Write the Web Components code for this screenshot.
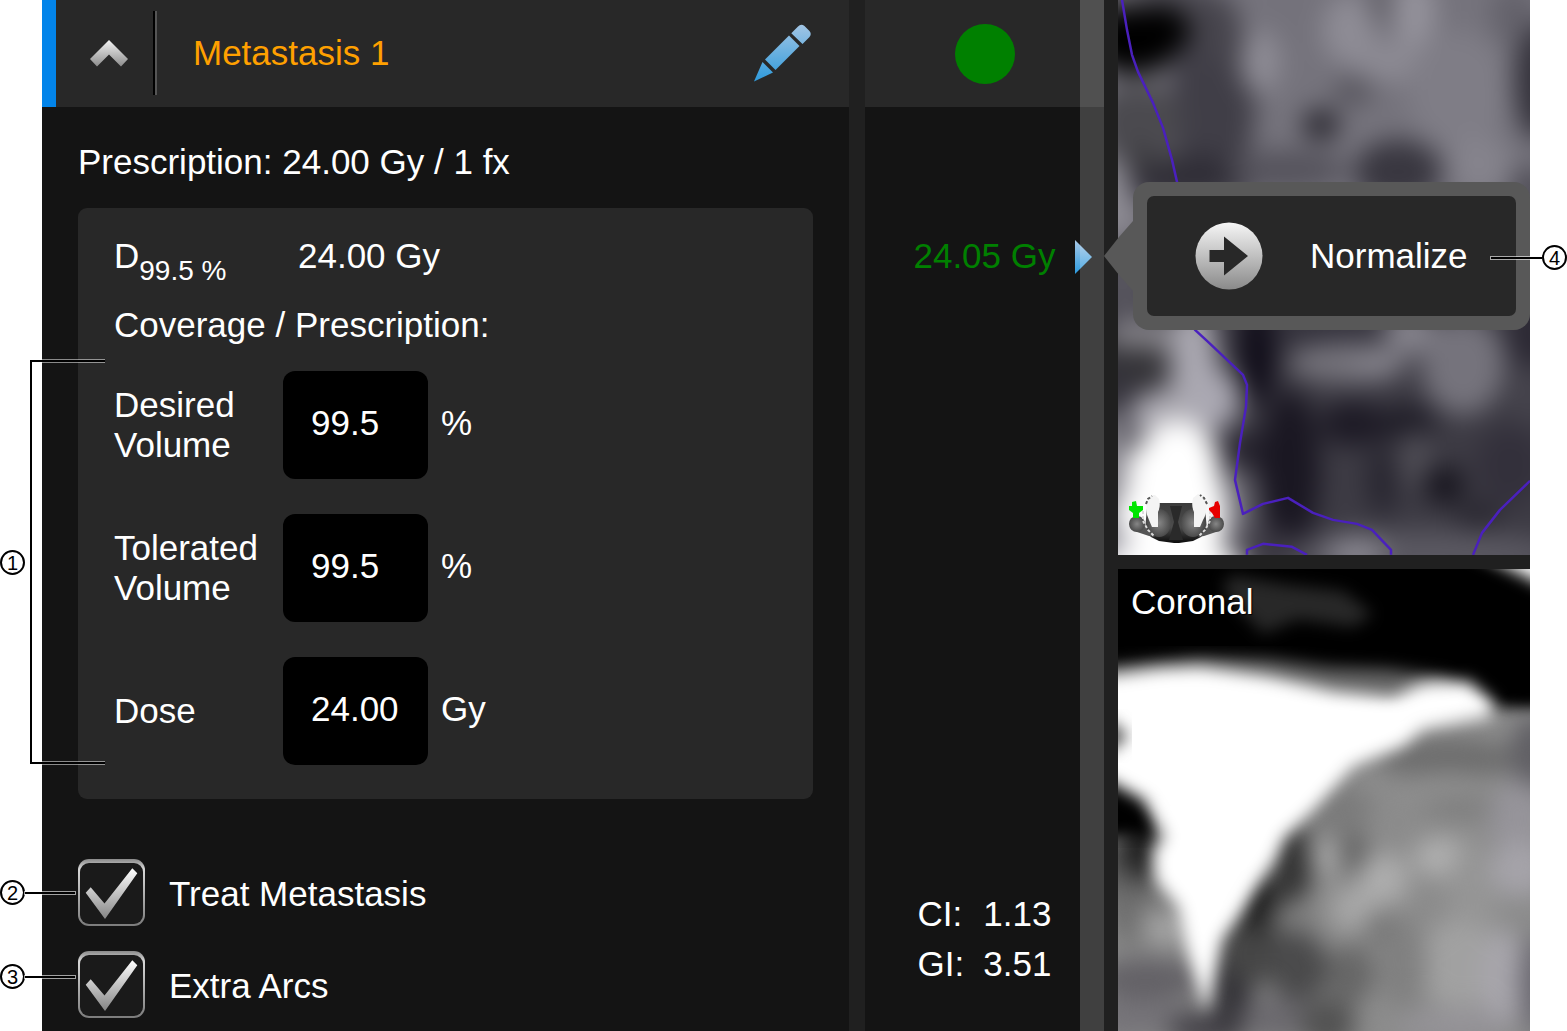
<!DOCTYPE html>
<html lang="en">
<head>
<meta charset="utf-8">
<meta name="viewport" content="width=device-width, initial-scale=1">
<title>Metastasis 1</title>
<style>
  body {
    margin: 0;
    background: #fff;
    color: #fff;
    font-family: "Liberation Sans", Arial, sans-serif;
    font-size: 35px;
    line-height: 40px;
  }
</style>
</head>
<body>
<plan-workspace>
  <plan-column slot="plan">
    <target-header slot="header">Metastasis 1</target-header>
    <span slot="summary">Prescription: 24.00 Gy / 1 fx</span>
    <coverage-panel>
      <dose-field label="Desired Volume" value="99.5" unit="%"></dose-field>
      <dose-field label="Tolerated Volume" value="99.5" unit="%"></dose-field>
      <dose-field label="Dose" value="24.00" unit="Gy"></dose-field>
    </coverage-panel>
    <check-option slot="options" label="Treat Metastasis" number="2"></check-option>
    <check-option slot="options" label="Extra Arcs" number="3" raised></check-option>
  </plan-column>
  <metric-column slot="metrics" ci="1.13" gi="3.51">
    24.05 Gy
    <normalize-popup slot="popup">Normalize</normalize-popup>
  </metric-column>
  <axial-view slot="views"></axial-view>
  <coronal-view slot="views">Coronal</coronal-view>
</plan-workspace>

<script>
/**
 * Treatment plan web components.
 *
 * - <plan-workspace>  Three-column frame
 * - <plan-column>     Target settings
 * - <metric-column>   Achieved dose and indices
 * - <axial-view>, <coronal-view>  Image views
 * - <plan-callout>    Numbered reference with leader line
 */

/**
 * Register an element whose shadow root is filled from a markup function.
 *
 * @param {string} name - Custom element name.
 * @param {(el: HTMLElement) => string} render - Returns shadow markup.
 * @returns {void}
 */
function define(name, render) {
  customElements.define(name, class extends HTMLElement {
    constructor() {
      super();
      this.attachShadow({ mode: 'open' });
    }

    connectedCallback() {
      this.shadowRoot.innerHTML = render(this);
    }
  });
}

/* ── <plan-callout> ───────────────────────────────────────────── */

define('plan-callout', () => `
  <style>
    :host {
      position: absolute;
      z-index: 5;
      display: flex;
      align-items: center;
      width: 75px;
      pointer-events: none;
    }
    :host([side="right"]) { flex-direction: row-reverse; }
    .number {
      flex: none;
      box-sizing: border-box;
      width: 25px;
      height: 25px;
      border: 2px solid #000;
      border-radius: 50%;
      background: #fff;
      color: #000;
      font-size: 20px;
      line-height: 22px;
      text-align: center;
    }
    .line {
      flex: 1;
      height: 2px;
      background: #000;
      box-shadow: 0 0 0 1px rgba(255, 255, 255, 0.6);
    }
    :host([bracket]) { width: 105px; }
    :host([bracket]) .line {
      align-self: stretch;
      height: auto;
      margin-left: 5px;
      background: none;
      border: 2px solid #000;
      border-right: 0;
      box-shadow: 0 -1px rgba(255, 255, 255, 0.5), inset 0 1px rgba(255, 255, 255, 0.5),
        inset 0 -1px rgba(255, 255, 255, 0.5), 0 1px rgba(255, 255, 255, 0.5);
    }
  </style>
  <span class="number"><slot></slot></span>
  <span class="line"></span>
`);

/* ── <target-header> ──────────────────────────────────────────── */

define('target-header', () => `
  <style>
    :host {
      display: flex;
      align-items: center;
      box-sizing: border-box;
      height: 107px;
      padding: 0 38px 2px 33px;
      border-left: 14px solid #0284ea;
      background: #282828;
      color: #ffa000;
    }
    button {
      padding: 0;
      border: 0;
      background: none;
      cursor: pointer;
    }
    svg { display: block; }
    .divider {
      width: 2px;
      height: 84px;
      margin: 0 36px 0 24px;
      background: #000;
      border-right: 2px solid #555;
    }
    h1 {
      flex: 1;
      margin: 0;
      font: inherit;
    }
  </style>
  <button type="button" aria-label="Collapse target">
    <svg width="40" height="28" viewBox="0 0 40 28">
      <defs>
        <linearGradient id="silver" x2="0" y2="1">
          <stop stop-color="#f4f4f4"/><stop offset="1" stop-color="#8c8c8c"/>
        </linearGradient>
      </defs>
      <path d="M20 1 39 20 32 27.500 20 15.500 8 27.500 1 20Z" fill="url(#silver)"/>
    </svg>
  </button>
  <span class="divider"></span>
  <h1><slot></slot></h1>
  <button type="button" aria-label="Rename target">
    <svg width="57" height="58" viewBox="0 0 57 58">
      <defs>
        <linearGradient id="pencil" gradientUnits="userSpaceOnUse" x1="0" y1="0" x2="0" y2="57">
          <stop stop-color="#a3c5e4"/><stop offset="1" stop-color="#2f9bdc"/>
        </linearGradient>
      </defs>
      <g fill="url(#pencil)">
        <path d="M0 57.500 8.500 38 19 48.500Z"/>
        <path d="M11 35.500 35 11.500 45.500 22 21.500 46Z"/>
        <path d="M37.300 9.200 44 2.500Q47-.8 50.500 2L55.500 7Q58 10 55.500 13L48.500 20Z"/>
      </g>
    </svg>
  </button>
`);

/* ── <dose-field> ─────────────────────────────────────────────── */

define('dose-field', (el) => `
  <style>
    :host {
      display: grid;
      grid-template-columns: 169px 145px 1fr;
      align-items: center;
    }
    input {
      box-sizing: border-box;
      width: 100%;
      height: 108px;
      padding: 0 0 4px 28px;
      border: 0;
      border-radius: 12px;
      background: #000;
      color: inherit;
      font: inherit;
    }
    .unit { padding: 0 0 4px 13px; }
  </style>
  <label for="value">${el.getAttribute('label')}</label>
  <input id="value" type="text" inputmode="decimal" value="${el.getAttribute('value')}">
  <span class="unit">${el.getAttribute('unit')}</span>
`);

/* ── <coverage-panel> ─────────────────────────────────────────── */

define('coverage-panel', () => `
  <style>
    :host {
      display: block;
      padding: 28px 36px 34px;
      border-radius: 9px;
      background: #282828;
    }
    .dose {
      display: grid;
      grid-template-columns: 184px 1fr;
      height: 40px;
      margin-bottom: 29px;
    }
    sub {
      position: relative;
      top: 12px;
      font-size: 28px;
      line-height: 0;
      vertical-align: baseline;
    }
    .fields {
      position: relative;
      display: grid;
      gap: 35px;
      margin-top: 26px;
    }
    plan-callout {
      top: -11px;
      bottom: 1px;
      left: -114px;
    }
  </style>
  <div class="dose">
    <span>D<sub>99.5 %</sub></span>
    <span>24.00 Gy</span>
  </div>
  <div>Coverage / Prescription:</div>
  <div class="fields">
    <plan-callout bracket>1</plan-callout>
    <slot></slot>
  </div>
`);

/* ── <check-option> ───────────────────────────────────────────── */

define('check-option', (el) => `
  <style>
    :host {
      position: relative;
      display: flex;
      align-items: center;
      gap: 24px;
    }
    .box { display: grid; }
    .box > * { grid-area: 1 / 1; }
    input {
      appearance: none;
      width: 67px;
      height: 67px;
      margin: 0;
      cursor: pointer;
    }
    svg { pointer-events: none; }
    label { padding-top: 2px; }
    input:not(:checked) + svg .tick { display: none; }
    plan-callout { left: -78px; top: 21px; }
    :host([raised]) plan-callout { top: 13px; }
  </style>
  <span class="box">
    <input id="option" type="checkbox" checked>
    <svg width="67" height="67" viewBox="0 0 67 67">
      <defs>
        <linearGradient id="edge" x2="0" y2="1">
          <stop stop-color="#8a8a8a"/><stop offset=".15" stop-color="#d8d8d8"/><stop offset="1" stop-color="#7c7c7c"/>
        </linearGradient>
        <linearGradient id="tick" x2="0" y2="1">
          <stop stop-color="#fff"/><stop offset="1" stop-color="#858585"/>
        </linearGradient>
      </defs>
      <rect width="67" height="67" rx="11" fill="url(#edge)"/>
      <rect x="2" y="4" width="63" height="61" rx="9" fill="#1a1a1a"/>
      <path class="tick" d="M7.700 33.700 12.700 28.300 26.500 44.500 54.300 9.300 59.300 14.300 27 60Z" fill="url(#tick)"/>
    </svg>
  </span>
  <label for="option">${el.getAttribute('label')}</label>
  <plan-callout>${el.getAttribute('number')}</plan-callout>
`);

/* ── <plan-column> ────────────────────────────────────────────── */

define('plan-column', () => `
  <style>
    :host { display: block; background: #141414; }
    .body { padding: 35px 36px 13px; }
    .summary { margin-bottom: 26px; }
    .options {
      display: grid;
      gap: 25px;
      margin-top: 60px;
    }
  </style>
  <slot name="header"></slot>
  <div class="body">
    <div class="summary"><slot name="summary"></slot></div>
    <slot></slot>
    <div class="options"><slot name="options"></slot></div>
  </div>
`);

/* ── <normalize-popup> ────────────────────────────────────────── */

define('normalize-popup', () => `
  <style>
    :host {
      position: absolute;
      z-index: 3;
      top: -54px;
      left: 100%;
      display: flex;
      align-items: center;
      color: #fff;
    }
    .pointer { display: block; flex: none; }
    .frame {
      padding: 14px;
      border-radius: 16px;
      background: #585858;
    }
    button {
      display: flex;
      align-items: center;
      gap: 47px;
      width: 369px;
      height: 120px;
      padding: 0 0 0 48px;
      border: 0;
      border-radius: 7px;
      background: #282828;
      color: inherit;
      font: inherit;
      cursor: pointer;
    }
    plan-callout { right: -37px; top: 63px; width: 76px; }
  </style>
  <svg class="pointer" width="29" height="76" viewBox="0 0 29 76">
    <path d="M0 38 15 19 29 3V73L15 57Z" fill="#585858"/>
  </svg>
  <div class="frame">
    <button type="button">
      <svg width="68" height="68" viewBox="0 0 68 68">
        <defs>
          <linearGradient id="disc" x2="0" y2="1">
            <stop stop-color="#f6f6f6"/><stop offset="1" stop-color="#8a8a8a"/>
          </linearGradient>
        </defs>
        <circle cx="34" cy="34" r="33.500" fill="url(#disc)"/>
        <path d="M14.500 28H29V14.500L53 34 29 53.500V40H14.500Z" fill="#282828"/>
      </svg>
      <slot></slot>
    </button>
  </div>
  <plan-callout side="right">4</plan-callout>
`);

/* ── <metric-column> ──────────────────────────────────────────── */

define('metric-column', (el) => `
  <style>
    :host {
      position: relative;
      display: flex;
      flex-direction: column;
      align-items: center;
      background: #141414;
    }
    .header {
      display: grid;
      place-items: center;
      width: 100%;
      height: 107px;
      background: #282828;
    }
    .status {
      width: 60px;
      height: 60px;
      border-radius: 50%;
      background: #008000;
    }
    .value {
      position: relative;
      width: 100%;
      margin-top: 129px;
      text-align: center;
      color: #008000;
    }
    .marker {
      position: absolute;
      top: 4px;
      right: 12px;
    }
    .scroll {
      position: absolute;
      z-index: 1;
      inset: 0 0 0 auto;
      width: 24px;
      background: rgba(255, 255, 255, 0.19);
    }
    dl {
      display: grid;
      grid-template-columns: auto auto;
      column-gap: 19px;
      margin: auto 0 42px;
      line-height: 50px;
    }
    dd { margin: 0; }
  </style>
  <div class="header"><span class="status"></span></div>
  <div class="value">
    <slot></slot>
    <svg class="marker" width="17" height="34" viewBox="0 0 17 34">
      <defs>
        <linearGradient id="blue" x2="0" y2="1">
          <stop stop-color="#a9c8e6"/><stop offset="1" stop-color="#2b9be0"/>
        </linearGradient>
      </defs>
      <path d="M0 0 17 17 0 34Z" fill="url(#blue)"/>
    </svg>
    <slot name="popup"></slot>
  </div>
  <dl>
    <dt>CI:</dt><dd>${el.getAttribute('ci')}</dd>
    <dt>GI:</dt><dd>${el.getAttribute('gi')}</dd>
  </dl>
  <span class="scroll"></span>
`);

/* ── Image views ──────────────────────────────────────────────── */

const viewStyle = `
  :host {
    position: relative;
    display: block;
    overflow: hidden;
    background: #000;
  }
  .scan {
    position: absolute;
    inset: 0;
    width: 100%;
    height: 100%;
  }
  filter { color-interpolation-filters: sRGB; }
`;

/**
 * Soft tissue patches.
 *
 * @param {Array<[number, number, number, number, string]>} patches - cx, cy, rx, ry, fill.
 * @returns {string} SVG ellipses.
 */
function tissue(patches) {
  return patches.map(([cx, cy, rx, ry, fill]) =>
    `<ellipse cx="${cx}" cy="${cy}" rx="${rx}" ry="${ry}" fill="${fill}"/>`).join('');
}

const axialTissue = [
  [40, 0, 60, 22, '#4c4a52'],
  [8, 0, 18, 14, '#6a686f'],
  [95, 100, 42, 95, '#403e47'],
  [65, 178, 80, 24, '#302e37'],
  [20, 120, 44, 36, '#4b4a4f'],
  [20, 160, 36, 12, '#3d3c41'],
  [16, 40, 46, 34, '#000'],
  [44, 30, 28, 24, '#000'],
  [100, 30, 22, 35, '#46444c'],
  [142, 62, 20, 32, '#8e8c95'],
  [180, 15, 35, 30, '#74727b'],
  [232, 30, 28, 35, '#8e8c95'],
  [264, 5, 12, 22, '#605e66'],
  [296, 12, 22, 36, '#94929b'],
  [272, 62, 36, 20, '#8c8a93'],
  [203, 125, 19, 16, '#2c2a32'],
  [235, 92, 20, 13, '#56545c'],
  [340, 90, 50, 60, '#7f7d86'],
  [420, 80, 24, 60, '#34323b'],
  [395, 15, 22, 30, '#64626b'],
  [170, 170, 60, 20, '#55535c'],
  [280, 172, 44, 32, '#393740'],
  [362, 165, 32, 30, '#85838c'],
  [412, 190, 20, 24, '#504e57'],
  [-4, 205, 18, 50, '#908e96'],
  [5, 280, 30, 40, '#56545d'],
  [30, 335, 44, 16, '#86848a'],
  [14, 367, 50, 20, '#343337'],
  [-6, 400, 18, 36, '#35333c'],
  [76, 370, 24, 70, '#aaa8b1'],
  [55, 415, 44, 26, '#aaa8b0'],
  [98, 400, 24, 30, '#aaa8b2'],
  [140, 345, 19, 60, '#100d19'],
  [130, 455, 26, 22, '#26232e'],
  [172, 470, 30, 80, '#1a1722'],
  [205, 330, 60, 10, '#302e39'],
  [230, 363, 60, 20, '#75737b'],
  [260, 365, 24, 12, '#86848d'],
  [292, 332, 26, 22, '#86848d'],
  [345, 365, 42, 50, '#75737c'],
  [414, 335, 24, 35, '#2c2934'],
  [412, 395, 22, 30, '#45434c'],
  [235, 424, 34, 22, '#1d1a25'],
  [290, 424, 28, 18, '#1d1b25'],
  [297, 460, 18, 30, '#4f4d55'],
  [265, 480, 16, 36, '#282630'],
  [326, 485, 21, 19, '#17151e'],
  [360, 515, 24, 13, '#28262f'],
  [392, 465, 34, 40, '#33303b'],
  [305, 555, 140, 24, '#5a5861'],
  [238, 555, 30, 20, '#86848d'],
  [150, 545, 36, 14, '#3b3842'],
  [122, 505, 18, 40, '#65636c'],
  [50, 515, 60, 80, '#fff'],
  [60, 468, 42, 48, '#fff'],
  [-8, 460, 18, 50, '#88868e'],
  [50, 568, 80, 22, '#fff'],
  [-6, 540, 16, 14, '#9896a0'],
];

define('axial-view', () => `
  <style>
    ${viewStyle}
    .patient {
      position: absolute;
      left: 11px;
      bottom: 11px;
    }
  </style>
  <svg class="scan" viewBox="0 0 412 555" preserveAspectRatio="xMidYMid slice">
    <defs><filter id="soft" x="-10%" y="-10%" width="120%" height="120%"><feGaussianBlur stdDeviation="13"/></filter></defs>
    <g filter="url(#soft)">
      <rect x="-50" y="-50" width="512" height="350" fill="#75737c"/>
      <rect x="-50" y="270" width="512" height="340" fill="#3d3b44"/>
      ${tissue(axialTissue)}
    </g>
    <g fill="none" stroke="#4a20bd" stroke-width="2.500" stroke-linejoin="round">
      <path d="M4 0 9 30 14 55 20 72 35 103 45 128 54 160 59 182 64 290 77 330 89 341 125 375 129 385 128 407 122 443 117 480 125 514 145 504 170 498 195 513 215 520 239 524 254 530 273 550V555"/>
      <path d="M129 555V550L145 544 174 547 189 555M412 481 382 510 364 533 355 555"/>
    </g>
  </svg>
  <svg class="patient" width="95" height="50" viewBox="0 0 95 50">
    <defs>
      <radialGradient id="hip"><stop stop-color="#868686"/><stop offset="1" stop-color="#4a4a4a"/></radialGradient>
      <linearGradient id="torso" x2="0" y2="1"><stop stop-color="#3c3c3c"/><stop offset=".6" stop-color="#4c4c4c"/><stop offset="1" stop-color="#0c0c0c"/></linearGradient>
    </defs>
    <path d="M16 36 22 43 30 47 45 49H50L64 47 72 43 78 36 76 14 64 9H30L18 14Z" fill="url(#torso)"/>
    <path d="M1 26 8 22 14 26 18 35 26 43 20 42 8 38 1 34ZM94 26 87 22 81 26 77 35 69 43 75 42 87 38 94 34Z" fill="#555"/>
    <ellipse cx="8" cy="30" rx="8" ry="8" fill="url(#hip)"/>
    <ellipse cx="87" cy="30" rx="8" ry="8" fill="url(#hip)"/>
    <ellipse cx="30" cy="29" rx="12" ry="14" fill="url(#hip)"/>
    <ellipse cx="64" cy="29" rx="12" ry="14" fill="url(#hip)"/>
    <path d="M18 8Q20 0 26 1L30 5Q32 12 29 18V33H23L20 26Q16 18 18 8ZM77 8Q75-1 69 0L64 4Q62 12 65 18V33H71L74 26Q79 18 77 8Z" fill="#f4f4f4"/>
    <path d="M17 10 19 5 23 2M78 10 75 4 71 1" fill="none" stroke="#555" stroke-width="2" stroke-dasharray="3 2"/>
    <path d="M14 17V27L19 36 25 42M81 17V27L76 36 70 42" fill="none" stroke="#ddd" stroke-width="2" stroke-dasharray="3 2"/>
    <path d="M41 12H53L49 28 54 46H40L45 28Z" fill="#2a2a2a"/>
    <path d="M3 8 7 7 8 12 14 12V16L10 19V24H4V19L0 16V12H3Z" fill="#00e500"/>
    <path d="M86 8 89 7 91 12V24H86L83 19 80 16V14L85 12Z" fill="#e60000"/>
  </svg>
`);

const coronalTissue = [
  [0, 300, 18, 36, '#484848'],
  [15, 335, 24, 40, '#6c6c6c'],
  [24, 270, 13, 46, '#0c0c0c'],
  [50, 355, 28, 18, '#a5a5a5'],
  [40, 336, 30, 6, '#707070'],
  [30, 410, 55, 22, '#636166'],
  [20, 450, 60, 20, '#757378'],
  [90, 460, 40, 20, '#47454b'],
  [115, 410, 20, 55, '#302f34'],
  [135, 375, 34, 40, '#464646'],
  [180, 398, 30, 36, '#4a4a4b'],
  [142, 335, 20, 28, '#1c1c1c'],
  [175, 295, 20, 38, '#303030'],
  [175, 350, 24, 14, '#7a7a7a'],
  [160, 450, 40, 22, '#6b696e'],
  [210, 455, 28, 26, '#525252'],
  [232, 405, 24, 30, '#666'],
  [206, 288, 14, 16, '#b0b0b0'],
  [236, 285, 14, 22, '#606060'],
  [215, 240, 40, 25, '#7b7b7b'],
  [265, 310, 26, 26, '#adadad'],
  [236, 340, 22, 22, '#a8a8a8'],
  [265, 360, 20, 16, '#757575'],
  [330, 190, 70, 20, '#6c6c6c'],
  [330, 216, 50, 12, '#909090'],
  [345, 238, 40, 10, '#7c7c7c'],
  [325, 288, 30, 20, '#b0b0b0'],
  [355, 330, 25, 60, '#959595'],
  [416, 185, 24, 40, '#605f64'],
  [400, 250, 28, 40, '#96949a'],
  [402, 300, 30, 28, '#a5a3a9'],
  [340, 395, 40, 44, '#a1a1a1'],
  [385, 410, 24, 50, '#a7a5ab'],
  [418, 415, 16, 50, '#66646c'],
  [285, 395, 24, 44, '#808080'],
  [340, 456, 60, 15, '#959398'],
];

define('coronal-view', () => `
  <style>
    ${viewStyle}
    .name {
      position: relative;
      display: block;
      padding: 13px;
      text-shadow: 1px 1px 1px #000;
    }
  </style>
  <svg class="scan" viewBox="0 0 412 462" preserveAspectRatio="xMidYMid slice">
    <defs>
      <filter id="soft" x="-10%" y="-10%" width="120%" height="120%"><feGaussianBlur stdDeviation="12"/></filter>
      <filter id="edge" x="-10%" y="-20%" width="120%" height="140%"><feGaussianBlur stdDeviation="8"/></filter>
    </defs>
    <rect width="412" height="462" fill="#000"/>
    <path d="M112 6 170 16 225 22 255 45 235 58 180 50 145 65 105 22Z" fill="#282828" filter="url(#edge)"/>
    <path d="M340-25H450V28Z" fill="#fff" filter="url(#edge)"/>
    <path d="M-20 275 40 230 150 170 300 138H440V490H-20Z" fill="#8c8c8c" filter="url(#edge)"/>
    <g filter="url(#soft)">${tissue(coronalTissue)}</g>
    <path d="M300 50H450V132H400L350 108Z" fill="#000" filter="url(#edge)"/>
    <path d="M-20 214 12 220 36 245 32 268-20 264Z" fill="#000" filter="url(#edge)"/>
    <path d="M-20 98 80 88 150 90 210 98 270 100 330 108 340 130 200 130-20 140Z" fill="#606060" filter="url(#edge)"/>
    <path d="M-20 108 40 100 82 98 149 107 215 121 275 126 305 114 350 112 376 134 372 148 305 160 285 177 235 197 194 242 166 267 156 290 142 310 121 345 103 370 88 444 68 376 61 338 38 310 36 282 48 268 26 231-20 206Z" fill="#fff" filter="url(#edge)"/>
    <path d="M-14 148 11 167-14 186Z" fill="#444" filter="url(#edge)"/>
  </svg>
  <span class="name"><slot></slot></span>
`);

/* ── <plan-workspace> ─────────────────────────────────────────── */

define('plan-workspace', () => `
  <style>
    :host { display: block; padding: 0 37px 0 42px; }
    main {
      display: grid;
      grid-template-columns: 823fr 239fr 426fr;
      min-height: 100vh;
      background: #202020;
    }
    .plan { display: grid; padding-right: 16px; }
    .metrics { display: grid; position: relative; z-index: 2; }
    .views {
      display: grid;
      grid-template-rows: 6fr 5fr;
      gap: 14px;
      padding-left: 14px;
    }
  </style>
  <main>
    <div class="plan"><slot name="plan"></slot></div>
    <div class="metrics"><slot name="metrics"></slot></div>
    <div class="views"><slot name="views"></slot></div>
  </main>
`);
</script>
</body>
</html>
